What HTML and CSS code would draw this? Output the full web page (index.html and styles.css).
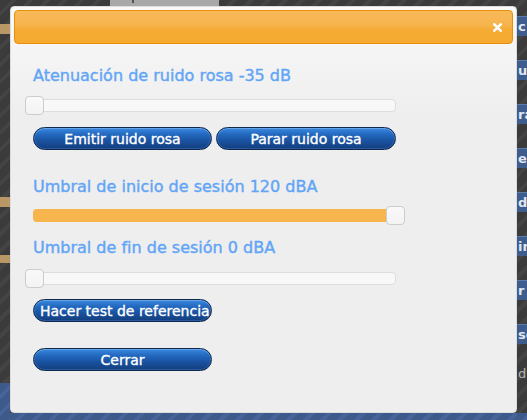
FILE: index.html
```html
<!DOCTYPE html>
<html lang="es">
<head>
<meta charset="utf-8">
<title>Ruido rosa</title>
<link rel="stylesheet" href="styles.css">
</head>
<body>
<div class="page">
  <div class="left-col">
    <div class="tan tan-1"></div>
    <div class="tan tan-2"></div>
    <div class="tan tan-3"></div>
    <div class="left-foot"></div>
  </div>
  <div class="mid-col">
    <div class="gray-tab"><span class="tab-mark"></span></div>
    <div class="mid-foot"></div>
  </div>
  <div class="right-col">
    <div class="side-item">c</div>
    <div class="side-item">u</div>
    <div class="side-item">ra</div>
    <div class="side-item">es</div>
    <div class="side-item">de</div>
    <div class="side-item">in</div>
    <div class="side-item">r</div>
    <div class="side-item">se</div>
    <div class="side-text">d</div>
    <div class="right-foot"></div>
  </div>
</div>

<div class="dialog">
  <div class="titlebar">
    <span class="close" title="Cerrar">
      <svg width="9" height="9" viewBox="0 0 9 9"><path d="M1.3 1.3 L7.7 7.7 M7.7 1.3 L1.3 7.7" stroke="#fff" stroke-width="2.6" stroke-linecap="round"/></svg>
    </span>
  </div>
  <div class="content">
    <div class="label label-1">Atenuación de ruido rosa -35 dB</div>
    <div class="slider slider-1"><span class="handle handle-min"></span></div>
    <div class="btn-row">
      <button class="btn">Emitir ruido rosa</button>
      <button class="btn btn-wide">Parar ruido rosa</button>
    </div>
    <div class="label label-2">Umbral de inicio de sesión 120 dBA</div>
    <div class="slider slider-2"><span class="range"></span><span class="handle handle-max"></span></div>
    <div class="label label-3">Umbral de fin de sesión 0 dBA</div>
    <div class="slider slider-3"><span class="handle handle-min"></span></div>
    <button class="btn btn-left btn-test">Hacer test de referencia</button>
    <button class="btn btn-close">Cerrar</button>
  </div>
</div>
</body>
</html>
```
FILE: styles.css
```css
html, body {
  margin: 0;
  padding: 0;
}
body {
  width: 527px;
  height: 420px;
  overflow: hidden;
  position: relative;
  font-family: "DejaVu Sans", Verdana, sans-serif;
  background: #404040;
}

/* ---------- background page ---------- */
.page {
  display: grid;
  grid-template-columns: 10px 507px 10px;
  height: 420px;
  background: repeating-linear-gradient(135deg, #3b3b3b 0px, #3b3b3b 8px, #444444 8px, #444444 12px);
}
.left-col {
  display: flex;
  flex-direction: column;
  height: 420px;
}
.tan {
  background: #b99866;
  height: 10px;
}
.tan-1 { margin-top: 24px; }
.tan-2 { margin-top: 163px; }
.tan-3 { margin-top: 48px; height: 8px; }
.left-foot {
  margin-top: auto;
  height: 37px;
  background: repeating-linear-gradient(135deg, #3e5a8b 0px, #3e5a8b 8px, #46639a 8px, #46639a 12px);
}
.mid-col {
  display: flex;
  flex-direction: column;
  height: 420px;
}
.gray-tab {
  margin-left: 100px;
  width: 109px;
  height: 6px;
  background: #a8a8a8;
}
.tab-mark {
  display: block;
  margin-left: 22px;
  width: 2px;
  height: 3px;
  background: #555;
}
.mid-foot {
  margin-top: auto;
  height: 7px;
  background: repeating-linear-gradient(135deg, #3e5a8b 0px, #3e5a8b 8px, #46639a 8px, #46639a 12px);
}
.right-col {
  display: flex;
  flex-direction: column;
  gap: 24px;
  padding-top: 16px;
  height: 420px;
  box-sizing: border-box;
  overflow: hidden;
}
.side-item {
  height: 20px;
  background: #3e5d8c;
  color: #dfe6ef;
  font-size: 13px;
  font-weight: bold;
  line-height: 19px;
  padding-left: 1px;
  white-space: nowrap;
  border-top: 1px solid #5a7aa8;
  box-sizing: border-box;
}
.side-text {
  color: #b5b5b5;
  font-size: 13px;
  line-height: 16px;
  padding-left: 1px;
  margin-top: -2px;
}
.right-foot {
  margin-top: auto;
  height: 7px;
  background: repeating-linear-gradient(135deg, #3e5a8b 0px, #3e5a8b 8px, #46639a 8px, #46639a 12px);
}

/* ---------- dialog ---------- */
.dialog {
  position: absolute;
  left: 10px;
  top: 6px;
  width: 507px;
  height: 407px;
  box-sizing: border-box;
  border: 1px solid #dcdcdc;
  border-radius: 4px;
  padding: 3px;
  background: linear-gradient(to bottom, #f9f9f9 0px, #eeeeee 110px, #eeeeee 100%);
}
.titlebar {
  height: 34px;
  box-sizing: border-box;
  border: 1px solid #e78f08;
  border-radius: 4px;
  background: linear-gradient(to bottom, #f8b959 0%, #f7b44d 45%, #f5ab35 58%, #f5a92f 100%);
  display: flex;
  align-items: center;
  justify-content: flex-end;
  padding-right: 10px;
}
.close {
  display: flex;
  width: 9px;
  height: 9px;
  margin-top: 1px;
}
.content {
  padding-left: 19px;
  display: flex;
  flex-direction: column;
  align-items: flex-start;
}
.label {
  font-size: 16px;
  line-height: 19px;
  color: #62a5f6;
  white-space: nowrap;
  -webkit-text-stroke: 0.4px #62a5f6;
}
.label-1 { margin-top: 22px; }
.label-2 { margin-top: 27px; }
.label-3 { margin-top: 16px; }

.slider {
  position: relative;
  width: 363px;
  height: 13px;
  box-sizing: border-box;
  border: 1px solid #dddddd;
  border-radius: 4px;
  background: #f8f8f8;
}
.slider-1 { margin-top: 14px; }
.slider-2 { margin-top: 13px; }
.slider-3 { margin-top: 15px; }
.range {
  position: absolute;
  inset: -1px;
  border-radius: 4px;
  background: #f6b64d;
}
.handle {
  position: absolute;
  top: -4px;
  width: 19px;
  height: 19px;
  margin-left: -9px;
  box-sizing: border-box;
  border: 1px solid #cccccc;
  border-radius: 4px;
  background: linear-gradient(to bottom, #f9f9f9, #f3f3f3);
}
.handle-min { left: 0; }
.handle-max { left: 100%; }

.btn-row {
  display: flex;
  gap: 4px;
  margin-top: 15px;
}
.btn {
  width: 179px;
  height: 23px;
  box-sizing: border-box;
  margin: 0;
  padding: 2px 0 0;
  border: 1px solid #10284c;
  border-radius: 12px;
  background: linear-gradient(to bottom, #3a8ae0 0%, #2369bf 30%, #1a53a2 60%, #133d7c 100%);
  box-shadow: inset 0 1px 0 rgba(170, 210, 255, 0.35), inset 0 0 0 1px rgba(80, 140, 220, 0.35);
  color: #ffffff;
  font-family: "DejaVu Sans", Verdana, sans-serif;
  font-size: 14px;
  line-height: 19px;
  text-align: center;
  white-space: nowrap;
  overflow: hidden;
  cursor: pointer;
  -webkit-text-stroke: 0.35px #ffffff;
}
.btn-wide { width: 180px; }
.btn-left {
  text-align: left;
  padding-left: 6px;
}
.btn-test { margin-top: 14px; }
.btn-close { margin-top: 26px; }
```
